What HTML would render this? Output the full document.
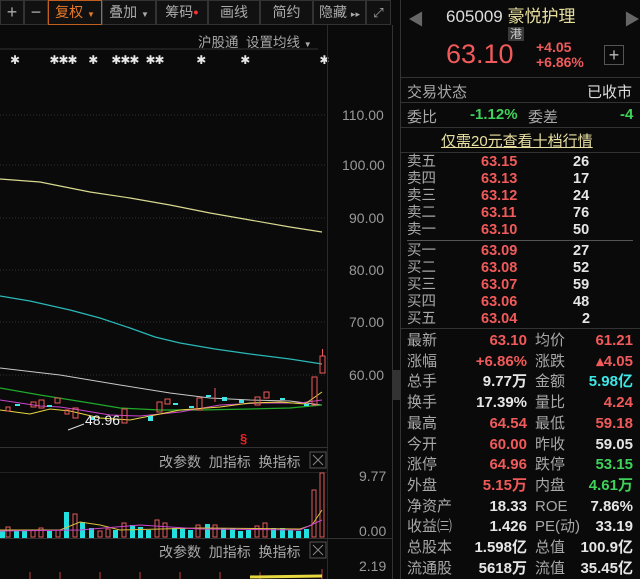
<!DOCTYPE html>
<html><head><meta charset="utf-8"><style>
*{margin:0;padding:0;box-sizing:border-box}
body{width:640px;height:579px;background:#0a0a0a;overflow:hidden;position:relative;font-family:"Liberation Sans","Noto Sans CJK SC",sans-serif;color:#bbb}
.a{position:absolute;white-space:nowrap}
.tb{position:absolute;top:0;height:25px;border:1px solid #333;color:#aaa;font-size:14px;text-align:center;line-height:23px;background:#111}
.r{color:#f05a5a}.g{color:#3fd25a}.w{color:#e6e6e6}.c{color:#3ee6e6}.l{color:#a8a8a8}
.ob{position:absolute;left:407px;width:228px;font-size:14.5px;height:13px;line-height:13px}
</style></head><body>
<div class="tb" style="left:0;width:24px;font-size:18px">+</div>
<div class="tb" style="left:24px;width:24px;font-size:18px">−</div>
<div class="tb" style="left:48px;width:54px;color:#e8792a;border-color:#c06020">复权 <span style="font-size:8px">▼</span></div>
<div class="tb" style="left:102px;width:54px">叠加 <span style="font-size:8px">▼</span></div>
<div class="tb" style="left:156px;width:52px">筹码<span style="color:#f33;font-size:9px;vertical-align:top">●</span></div>
<div class="tb" style="left:208px;width:52px">画线</div>
<div class="tb" style="left:260px;width:53px">简约</div>
<div class="tb" style="left:313px;width:53px">隐藏 <span style="font-size:9px">▸▸</span></div>
<div class="tb" style="left:366px;width:25px;font-size:13px">⤢</div>
<div class="a l" style="left:198px;top:31px;font-size:13.5px">沪股通 &nbsp;设置均线 <span style="font-size:8px">▼</span></div>
<div class="a w" style="left:10px;top:53px;font-size:12px;letter-spacing:-1px">✱ &nbsp;&nbsp;&nbsp;&nbsp;&nbsp;&nbsp;&nbsp;&nbsp;&nbsp;&nbsp;&nbsp;&nbsp;✱✱✱ &nbsp;&nbsp;&nbsp;&nbsp;✱ &nbsp;&nbsp;&nbsp;&nbsp;&nbsp;✱✱✱ &nbsp;&nbsp;✱✱ &nbsp;&nbsp;&nbsp;&nbsp;&nbsp;&nbsp;&nbsp;&nbsp;&nbsp;&nbsp;&nbsp;&nbsp;&nbsp;✱ &nbsp;&nbsp;&nbsp;&nbsp;&nbsp;&nbsp;&nbsp;&nbsp;&nbsp;&nbsp;&nbsp;&nbsp;&nbsp;&nbsp;✱ &nbsp;&nbsp;&nbsp;&nbsp;&nbsp;&nbsp;&nbsp;&nbsp;&nbsp;&nbsp;&nbsp;&nbsp;&nbsp;&nbsp;&nbsp;&nbsp;&nbsp;&nbsp;&nbsp;&nbsp;&nbsp;&nbsp;&nbsp;&nbsp;&nbsp;&nbsp;&nbsp;&nbsp;&nbsp;✱</div>

<svg class="a" style="left:0;top:0" width="400" height="579">
<g stroke="#333" stroke-dasharray="1 2">
<line x1="0" y1="115" x2="330" y2="115"/><line x1="0" y1="165" x2="330" y2="165"/><line x1="0" y1="218" x2="330" y2="218"/><line x1="0" y1="270" x2="330" y2="270"/><line x1="0" y1="322" x2="330" y2="322"/><line x1="0" y1="375" x2="330" y2="375"/>
</g>
<line x1="0" y1="49" x2="318" y2="49" stroke="#333"/>
<line x1="327.5" y1="25" x2="327.5" y2="579" stroke="#2a2a2a"/>
<line x1="392.5" y1="25" x2="392.5" y2="579" stroke="#333"/>
<rect x="393" y="370" width="7" height="30" fill="#333"/>
<line x1="0" y1="447.5" x2="328" y2="447.5" stroke="#333"/>
<line x1="0" y1="538.5" x2="392" y2="538.5" stroke="#333"/>
<line x1="0" y1="472.5" x2="328" y2="472.5" stroke="#222"/>
<polyline fill="none" stroke="#d8d890" stroke-width="1.2" points="0,179 40,182 60,186 90,192 130,198 170,205 210,213 250,220 290,227 322,232"/>
<polyline fill="none" stroke="#2bb8b8" stroke-width="1.2" points="0,296 30,301 70,310 100,318 130,328 155,337 180,343 215,349 250,354 290,359 322,364"/>
<polyline fill="none" stroke="#c8c8c8" stroke-width="1" points="0,368 60,375 120,385 170,393 210,398 250,400 290,401 322,405"/>
<polyline fill="none" stroke="#1faa2a" stroke-width="1.2" points="0,388 40,395 90,403 120,408 160,410 200,410 250,409 290,408 322,405"/>
<polyline fill="none" stroke="#cc44cc" stroke-width="1" points="0,400 40,406 60,407 80,410 110,415 140,416 180,412 220,405 260,403 300,403 322,400"/>
<polyline fill="none" stroke="#e8d840" stroke-width="1" points="0,410 30,414 50,409 70,411 100,418 130,420 150,416 180,410 220,407 250,403 280,402 305,404 322,392"/>
<g stroke="#f05a5a" fill="none">
<rect x="6" y="407" width="4" height="4"/><rect x="31" y="402" width="5" height="5"/><rect x="39" y="400" width="5" height="8"/><rect x="55" y="398" width="5" height="5"/><rect x="65" y="410" width="4" height="4"/><rect x="73" y="408" width="5" height="10"/><rect x="122" y="409" width="5" height="14"/><rect x="157" y="402" width="5" height="10"/><rect x="165" y="399" width="5" height="5"/><rect x="197" y="398" width="5" height="12"/><rect x="255" y="397" width="5" height="8"/><rect x="264" y="392" width="5" height="6"/><rect x="312" y="377" width="5" height="28"/><rect x="320" y="356" width="5" height="17"/>
<line x1="322.5" y1="349" x2="322.5" y2="356"/><line x1="215" y1="388" x2="215" y2="402"/>
</g>
<g fill="#3ee6e6"><rect x="15" y="404" width="5" height="2"/><rect x="47" y="405" width="5" height="2"/><rect x="90" y="417" width="5" height="3"/><rect x="148" y="416" width="5" height="5"/><rect x="173" y="403" width="5" height="2"/><rect x="189" y="406" width="5" height="2"/><rect x="206" y="395" width="5" height="2"/><rect x="222" y="397" width="5" height="4"/><rect x="239" y="400" width="5" height="3"/><rect x="280" y="398" width="5" height="2"/><rect x="304" y="404" width="5" height="2"/></g>
<text x="85" y="425" fill="#eee" font-size="14" font-family="Liberation Sans">48.96</text>
<line x1="68" y1="430" x2="84" y2="424" stroke="#ddd"/>
<text x="240" y="443" fill="#e22" font-size="13" font-weight="bold" font-family="Liberation Sans">§</text>
<g font-family="Liberation Sans" font-size="14" fill="#999">
<text x="342" y="120">110.00</text><text x="342" y="170">100.00</text><text x="349" y="223">90.00</text><text x="349" y="275">80.00</text><text x="349" y="327">70.00</text><text x="349" y="380">60.00</text>
<text x="359" y="481">9.77</text><text x="359" y="536">0.00</text><text x="359" y="571">2.19</text>
</g>
<rect x="310" y="452" width="16" height="16" fill="none" stroke="#555"/>
<path d="M313 455l10 10M323 455l-10 10" stroke="#888"/>
<rect x="310" y="542" width="16" height="16" fill="none" stroke="#555"/>
<path d="M313 545l10 10M323 545l-10 10" stroke="#888"/>
<g fill="#22e0e0">
<rect x="0" y="530" width="5" height="8"/><rect x="14" y="530" width="5" height="8"/><rect x="22" y="530" width="5" height="8"/><rect x="47" y="531" width="5" height="7"/><rect x="64" y="512" width="5" height="26"/><rect x="80" y="522" width="5" height="16"/><rect x="89" y="528" width="5" height="10"/><rect x="113" y="530" width="5" height="8"/><rect x="130" y="525" width="5" height="13"/><rect x="138" y="527" width="5" height="11"/><rect x="146" y="530" width="5" height="8"/><rect x="172" y="528" width="5" height="10"/><rect x="180" y="528" width="5" height="10"/><rect x="188" y="530" width="5" height="8"/><rect x="205" y="524" width="5" height="14"/><rect x="221" y="528" width="5" height="10"/><rect x="230" y="528" width="5" height="10"/><rect x="238" y="531" width="5" height="7"/><rect x="246" y="530" width="5" height="8"/><rect x="271" y="528" width="5" height="10"/><rect x="280" y="528" width="5" height="10"/><rect x="288" y="530" width="5" height="8"/><rect x="296" y="531" width="5" height="7"/><rect x="304" y="529" width="5" height="9"/></g>
<g fill="none" stroke="#e05a5a">
<rect x="6" y="527" width="4" height="10"/><rect x="31" y="530" width="4" height="7"/><rect x="39" y="528" width="4" height="9"/><rect x="56" y="530" width="4" height="7"/><rect x="73" y="514" width="4" height="23"/><rect x="98" y="531" width="4" height="6"/><rect x="106" y="529" width="4" height="8"/><rect x="122" y="523" width="4" height="14"/><rect x="155" y="520" width="4" height="17"/><rect x="163" y="523" width="4" height="14"/><rect x="196" y="525" width="4" height="12"/><rect x="213" y="525" width="4" height="12"/><rect x="255" y="526" width="4" height="11"/><rect x="263" y="523" width="4" height="14"/><rect x="312" y="490" width="4" height="47"/><rect x="320" y="473" width="4" height="64"/></g>
<polyline fill="none" stroke="#d8c040" points="0,530 60,530 80,522 100,525 120,530 200,528 300,529 312,525 322,510"/>
<polyline fill="none" stroke="#cc44cc" points="0,531 80,530 140,525 200,529 300,530 322,520"/>
<g stroke="#c04040"><line x1="30" y1="572" x2="30" y2="579"/><line x1="60" y1="572" x2="60" y2="579"/><line x1="100" y1="572" x2="100" y2="579"/><line x1="140" y1="572" x2="140" y2="579"/><line x1="180" y1="572" x2="180" y2="579"/><line x1="220" y1="572" x2="220" y2="579"/><line x1="260" y1="572" x2="260" y2="579"/><line x1="322" y1="569" x2="322" y2="579"/></g>
<line x1="250" y1="577" x2="322" y2="576" stroke="#e8d840" stroke-width="3"/>
</svg>
<div class="a l" style="left:159px;top:452px;font-size:14px">改参数 &nbsp;加指标 &nbsp;换指标</div>
<div class="a l" style="left:159px;top:542px;font-size:14px">改参数 &nbsp;加指标 &nbsp;换指标</div>

<div class="a" style="left:400px;top:0;width:1px;height:579px;background:#333"></div>
<div class="a" style="left:408px;top:6px;font-size:16px;color:#666">◀</div>
<div class="a" style="left:624px;top:6px;font-size:16px;color:#666">▶</div>
<div class="a" style="left:446px;top:2px;font-size:17px;color:#ddd">605009 <span style="color:#e8e0a0">豪悦护理</span></div>
<div class="a" style="left:508px;top:27px;width:16px;height:14px;background:#3a3a3a;color:#ccc;font-size:12px;line-height:14px;text-align:center">港</div>
<div class="a r" style="left:446px;top:39px;font-size:27px">63.10</div>
<div class="a r" style="left:536px;top:40px;font-size:14px;line-height:15px;font-weight:bold">+4.05<br>+6.86%</div>
<div class="a" style="left:604px;top:45px;width:20px;height:20px;border:1px solid #555;color:#bbb;text-align:center;line-height:18px;font-size:18px">+</div>
<div class="a" style="left:400px;top:77px;width:240px;height:1px;background:#333"></div>
<div class="a l" style="left:407px;top:81px;font-size:15px">交易状态</div>
<div class="a" style="left:587px;top:81px;font-size:15px;color:#ddd">已收市</div>
<div class="a" style="left:400px;top:102px;width:240px;height:1px;background:#333"></div>
<div class="a l" style="left:407px;top:106px;font-size:15px">委比</div>
<div class="a g" style="left:470px;top:106px;font-size:15px;font-weight:bold">-1.12%</div>
<div class="a l" style="left:528px;top:106px;font-size:15px">委差</div>
<div class="a g" style="left:620px;top:106px;font-size:15px;font-weight:bold">-4</div>
<div class="a" style="left:400px;top:127px;width:240px;height:1px;background:#333"></div>
<div class="a" style="left:441px;top:130px;font-size:15px;color:#e8e0a0;text-decoration:underline">仅需20元查看十档行情</div>
<div class="a" style="left:400px;top:152px;width:240px;height:1px;background:#333"></div>
<div class="ob" style="top:156px"><span class="l">卖五</span><span class="a r" style="left:74px;font-weight:bold">63.15</span><span class="a w" style="left:166px;font-weight:bold">26</span></div>
<div class="ob" style="top:173px"><span class="l">卖四</span><span class="a r" style="left:74px;font-weight:bold">63.13</span><span class="a w" style="left:166px;font-weight:bold">17</span></div>
<div class="ob" style="top:190px"><span class="l">卖三</span><span class="a r" style="left:74px;font-weight:bold">63.12</span><span class="a w" style="left:166px;font-weight:bold">24</span></div>
<div class="ob" style="top:207px"><span class="l">卖二</span><span class="a r" style="left:74px;font-weight:bold">63.11</span><span class="a w" style="left:166px;font-weight:bold">76</span></div>
<div class="ob" style="top:224px"><span class="l">卖一</span><span class="a r" style="left:74px;font-weight:bold">63.10</span><span class="a w" style="left:166px;font-weight:bold">50</span></div>
<div class="a" style="left:407px;top:240px;width:226px;height:1px;background:#555"></div>
<div class="ob" style="top:245px"><span class="l">买一</span><span class="a r" style="left:74px;font-weight:bold">63.09</span><span class="a w" style="left:166px;font-weight:bold">27</span></div>
<div class="ob" style="top:262px"><span class="l">买二</span><span class="a r" style="left:74px;font-weight:bold">63.08</span><span class="a w" style="left:166px;font-weight:bold">52</span></div>
<div class="ob" style="top:279px"><span class="l">买三</span><span class="a r" style="left:74px;font-weight:bold">63.07</span><span class="a w" style="left:166px;font-weight:bold">59</span></div>
<div class="ob" style="top:296px"><span class="l">买四</span><span class="a r" style="left:74px;font-weight:bold">63.06</span><span class="a w" style="left:166px;font-weight:bold">48</span></div>
<div class="ob" style="top:313px"><span class="l">买五</span><span class="a r" style="left:74px;font-weight:bold">63.04</span><span class="a w" style="left:175px;font-weight:bold">2</span></div>
<div class="a" style="left:400px;top:328px;width:240px;height:1px;background:#333"></div>

<div style="position:absolute;left:407px;top:331px;width:226px;font-size:15px;line-height:20.7px">
<div style="display:flex"><span class="l" style="width:52px">最新</span><span class="r" style="width:68px;text-align:right;font-weight:bold">63.10</span><span class="l" style="width:50px;padding-left:8px">均价</span><span class="r" style="width:56px;text-align:right;font-weight:bold">61.21</span></div>
<div style="display:flex"><span class="l" style="width:52px">涨幅</span><span class="r" style="width:68px;text-align:right;font-weight:bold">+6.86%</span><span class="l" style="width:50px;padding-left:8px">涨跌</span><span class="r" style="width:56px;text-align:right;font-weight:bold">▴4.05</span></div>
<div style="display:flex"><span class="l" style="width:52px">总手</span><span class="w" style="width:68px;text-align:right;font-weight:bold">9.77万</span><span class="l" style="width:50px;padding-left:8px">金额</span><span class="c" style="width:56px;text-align:right;font-weight:bold">5.98亿</span></div>
<div style="display:flex"><span class="l" style="width:52px">换手</span><span class="w" style="width:68px;text-align:right;font-weight:bold">17.39%</span><span class="l" style="width:50px;padding-left:8px">量比</span><span class="r" style="width:56px;text-align:right;font-weight:bold">4.24</span></div>
<div style="display:flex"><span class="l" style="width:52px">最高</span><span class="r" style="width:68px;text-align:right;font-weight:bold">64.54</span><span class="l" style="width:50px;padding-left:8px">最低</span><span class="r" style="width:56px;text-align:right;font-weight:bold">59.18</span></div>
<div style="display:flex"><span class="l" style="width:52px">今开</span><span class="r" style="width:68px;text-align:right;font-weight:bold">60.00</span><span class="l" style="width:50px;padding-left:8px">昨收</span><span class="w" style="width:56px;text-align:right;font-weight:bold">59.05</span></div>
<div style="display:flex"><span class="l" style="width:52px">涨停</span><span class="r" style="width:68px;text-align:right;font-weight:bold">64.96</span><span class="l" style="width:50px;padding-left:8px">跌停</span><span class="g" style="width:56px;text-align:right;font-weight:bold">53.15</span></div>
<div style="display:flex"><span class="l" style="width:52px">外盘</span><span class="r" style="width:68px;text-align:right;font-weight:bold">5.15万</span><span class="l" style="width:50px;padding-left:8px">内盘</span><span class="g" style="width:56px;text-align:right;font-weight:bold">4.61万</span></div>
<div style="display:flex"><span class="l" style="width:52px">净资产</span><span class="w" style="width:68px;text-align:right;font-weight:bold">18.33</span><span class="l" style="width:50px;padding-left:8px">ROE</span><span class="w" style="width:56px;text-align:right;font-weight:bold">7.86%</span></div>
<div style="display:flex"><span class="l" style="width:52px">收益㈢</span><span class="w" style="width:68px;text-align:right;font-weight:bold">1.426</span><span class="l" style="width:50px;padding-left:8px">PE(动)</span><span class="w" style="width:56px;text-align:right;font-weight:bold">33.19</span></div>
<div style="display:flex"><span class="l" style="width:52px">总股本</span><span class="w" style="width:68px;text-align:right;font-weight:bold">1.598亿</span><span class="l" style="width:50px;padding-left:8px">总值</span><span class="w" style="width:56px;text-align:right;font-weight:bold">100.9亿</span></div>
<div style="display:flex"><span class="l" style="width:52px">流通股</span><span class="w" style="width:68px;text-align:right;font-weight:bold">5618万</span><span class="l" style="width:50px;padding-left:8px">流值</span><span class="w" style="width:56px;text-align:right;font-weight:bold">35.45亿</span></div>
</div>
</body></html>
